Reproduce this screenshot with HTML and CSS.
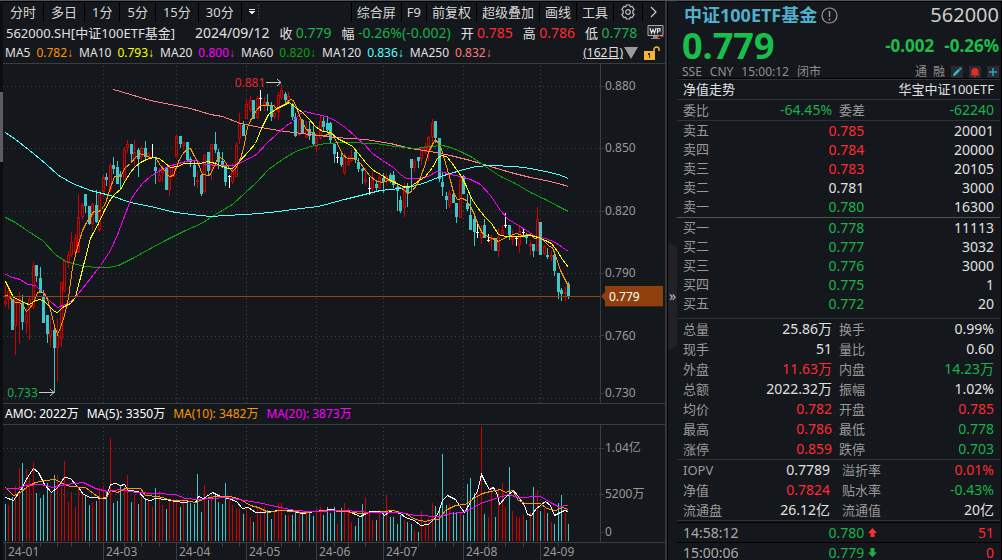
FILE: index.html
```html
<!DOCTYPE html>
<html lang="zh-CN">
<head>
<meta charset="utf-8">
<meta name="viewport" content="width=device-width, initial-scale=1">
<title>中证100ETF基金 562000</title>
<link rel="stylesheet" href="styles.css">
</head>
<body>
<div class="app">
  <div class="rail"><div class="rail-thumb"></div></div>

  <main class="main">
    <nav class="tabs">
      <button class="tab">分时</button>
      <button class="tab">多日</button>
      <button class="tab">1分</button>
      <button class="tab">5分</button>
      <button class="tab">15分</button>
      <button class="tab">30分</button>
      <button class="tab tab-more" aria-label="更多周期">
        <svg width="14" height="14" viewBox="0 0 14 14"><path d="M0 4h6v1H0zM0 6h6v1H5v1H4v1H2V8H1V7H0z" fill="#e4e4e4"/><path d="M9.500 0v14" stroke="#555" stroke-dasharray="1 2"/></svg>
      </button>
      <span class="spacer"></span>
      <button class="tab tool">综合屏</button>
      <button class="tab tool">F9</button>
      <button class="tab tool">前复权</button>
      <button class="tab tool">超级叠加</button>
      <button class="tab tool">画线</button>
      <button class="tab tool">工具</button>
      <button class="tab tool tool-icon" aria-label="设置">
        <svg width="16" height="16" viewBox="0 0 16 16" fill="none" stroke="#bdbdbd" stroke-width="1.200"><path d="M6.300 1h3.400l.6 1.900 1.900-.4 1.900 2.900L12.800 7v2l1.300 1.600-1.900 2.900-1.900-.4-.6 1.900H6.300l-.6-1.900-1.900.4-1.900-2.900L3.200 9V7L1.900 5.400l1.900-2.900 1.900.4z"/><circle cx="8" cy="8" r="2.300"/></svg>
      </button>
      <button class="tab tool tool-icon" aria-label="下一页">
        <svg width="10" height="12" viewBox="0 0 10 12" fill="none" stroke="#cfcfcf" stroke-width="1.200"><path d="M2 1l5 5-5 5"/></svg>
      </button>
    </nav>

    <div class="quote-line">
      <span class="name">562000.SH[中证100ETF基金]</span>
      <span class="num">2024/09/12</span>
      <span>收 <b class="num down">0.779</b></span>
      <span>幅 <b class="num down">-0.26%(-0.002)</b></span>
      <span>开 <b class="num up">0.785</b></span>
      <span>高 <b class="num up">0.786</b></span>
      <span>低 <b class="num down">0.778</b></span>
      <svg class="wp" width="17" height="17" viewBox="0 0 17 17"><path d="M1 1.500h15v10H1z" fill="#24272b" stroke="#aaa"/><path d="M6 12h5v2h2v1H4v-1h2z" fill="#888"/><path d="M3 4l1.500 5L6 5.500 7.500 9 9 4M10.500 9.500V4.500h2.500v2.500h-2.500" fill="none" stroke="#ddd" stroke-width="1.200"/><path d="M10 13.500l2.500-2 1.500 1.500 2.500-.5" fill="none" stroke="#e02626"/></svg>
    </div>

    <div class="ma-line">
      <span>MA5</span><span class="c-orange">0.782<i>↓</i></span>
      <span>MA10</span><span class="c-yellow">0.793<i>↓</i></span>
      <span>MA20</span><span class="c-magenta">0.800<i>↓</i></span>
      <span>MA60</span><span class="c-green">0.820<i>↓</i></span>
      <span>MA120</span><span class="c-cyan">0.836<i>↓</i></span>
      <span>MA250</span><span class="c-salmon">0.832<i>↓</i></span>
      <span class="spacer"></span>
      <button class="range">(162日)<svg width="14" height="12" viewBox="0 0 14 12"><path d="M0 0h14L7 12z" fill="#9b9b9b"/></svg></button>
      <svg class="lock" width="16" height="14" viewBox="0 0 16 14"><path d="M0 5h11v9H0z" fill="#f5b335"/><path d="M10 5V3.500a2.500 2.500 0 0 1 5 0V5" fill="none" stroke="#f5b335" stroke-width="1.500"/><path d="M4 7h2v5H5V9H4z" fill="#2a2418"/></svg>
    </div>

    <section class="pane price-pane">
      <div class="plot">
        <svg id="price" class="canvas" viewBox="3 64 597 339" preserveAspectRatio="none"></svg>
        <span class="mark mark-high">0.881<svg width="17" height="9" viewBox="0 0 17 9"><path d="M1 4.500h15M12 1l4 3.500L12 8" fill="none" stroke="#ccc"/></svg></span>
        <span class="mark mark-low">0.733<svg width="17" height="9" viewBox="0 0 17 9"><path d="M1 4.500h15M12 1l4 3.500L12 8" fill="none" stroke="#ccc"/></svg></span>
      </div>
      <div class="axis" id="price-axis">
        <div class="last-tag">0.779</div>
      </div>
    </section>

    <div class="amo-line">
      <span>AMO: 2022万</span>
      <span>MA(5): 3350万</span>
      <span class="c-orange">MA(10): 3482万</span>
      <span class="c-magenta">MA(20): 3873万</span>
    </div>

    <section class="pane volume-pane">
      <div class="plot"><svg id="volume" class="canvas" viewBox="3 425 597 117" preserveAspectRatio="none"></svg></div>
      <div class="axis" id="volume-axis"></div>
    </section>

    <div class="dates">
      <div class="plot" id="dates"></div>
      <div class="dates-end"></div>
    </div>
  </main>

  <button class="splitter" aria-label="收起侧栏"><span>»</span></button>

  <aside class="side">
    <header class="head">
      <div class="head-row">
        <h1>中证100ETF基金</h1>
        <svg width="17" height="17" viewBox="0 0 17 17" fill="none" stroke="#999"><circle cx="8.500" cy="8.500" r="7.500" stroke-width="1.200"/><path d="M8.500 4v6M8.500 11.500v2" stroke-width="1.500"/></svg>
        <span class="spacer"></span>
        <span class="code">562000</span>
      </div>
      <div class="head-row price-row">
        <strong class="last">0.779</strong>
        <span class="spacer"></span>
        <span class="chg">-0.002</span>
        <span class="chg">-0.26%</span>
      </div>
      <div class="head-row meta">
        <span>SSE</span><span>CNY</span><span>15:00:12</span><span>闭市</span>
        <span class="spacer"></span>
        <span class="flags">通</span><span class="flags">融</span>
        <button class="mini" aria-label="编辑"><svg width="12" height="12" viewBox="0 0 12 12"><path d="M2 10l.6-2.400 4.800-4.800 1.800 1.800-4.800 4.800zM8 2.200l1-1 1.800 1.800-1 1z" fill="#35b6cc"/></svg></button>
        <button class="mini" aria-label="提醒"><svg width="12" height="12" viewBox="0 0 12 12"><path d="M2.500 8V5.500a3.500 3.500 0 0 1 7 0V8l1 1.500h-9zM5 10h2v1H5z" fill="#e32d20"/></svg></button>
        <button class="mini" aria-label="添加"><svg width="12" height="12" viewBox="0 0 12 12"><path d="M6 2v8M2 6h8" stroke="#2fa3ba" stroke-width="1.500"/></svg></button>
      </div>
    </header>

    <div class="link-row"><a href="#nav">净值走势</a><a href="#fund">华宝中证100ETF</a></div>

    <table class="pairs ratio">
      <tr><th>委比</th><td class="down">-64.45%</td><th>委差</th><td class="down">-62240</td></tr>
    </table>

    <table class="book">
      <tr><th>卖五</th><td class="up">0.785</td><td>20001</td></tr>
      <tr><th>卖四</th><td class="up">0.784</td><td>20000</td></tr>
      <tr><th>卖三</th><td class="up">0.783</td><td>20105</td></tr>
      <tr><th>卖二</th><td>0.781</td><td>3000</td></tr>
      <tr><th>卖一</th><td class="down">0.780</td><td>16300</td></tr>
    </table>
    <table class="book bids">
      <tr><th>买一</th><td class="down">0.778</td><td>11113</td></tr>
      <tr><th>买二</th><td class="down">0.777</td><td>3032</td></tr>
      <tr><th>买三</th><td class="down">0.776</td><td>3000</td></tr>
      <tr><th>买四</th><td class="down">0.775</td><td>1</td></tr>
      <tr><th>买五</th><td class="down">0.772</td><td>20</td></tr>
    </table>

    <table class="pairs">
      <tr><th>总量</th><td>25.86万</td><th>换手</th><td>0.99%</td></tr>
      <tr><th>现手</th><td>51</td><th>量比</th><td>0.60</td></tr>
      <tr><th>外盘</th><td class="up">11.63万</td><th>内盘</th><td class="down">14.23万</td></tr>
      <tr><th>总额</th><td>2022.32万</td><th>振幅</th><td>1.02%</td></tr>
      <tr><th>均价</th><td class="up">0.782</td><th>开盘</th><td class="up">0.785</td></tr>
      <tr><th>最高</th><td class="up">0.786</td><th>最低</th><td class="down">0.778</td></tr>
      <tr><th>涨停</th><td class="up">0.859</td><th>跌停</th><td class="down">0.703</td></tr>
    </table>
    <table class="pairs fund">
      <tr><th>IOPV</th><td>0.7789</td><th>溢折率</th><td class="up">0.01%</td></tr>
      <tr><th>净值</th><td class="up">0.7824</td><th>贴水率</th><td class="down">-0.43%</td></tr>
      <tr><th>流通盘</th><td>26.12亿</td><th>流通值</th><td>20亿</td></tr>
    </table>

    <table class="ticks">
      <tr><th>14:58:12</th><td class="down">0.780</td><td class="dir"><svg width="9" height="10" viewBox="0 0 9 10"><path d="M4.500 0L9 5H6.500v4h-4V5H0z" fill="#ff2d2d"/></svg></td><td class="up">51</td></tr>
      <tr><th>15:00:06</th><td class="down">0.779</td><td class="dir"><svg width="9" height="10" viewBox="0 0 9 10"><path d="M4.500 9L0 4.500h2.500V0h4v4.500H9z" fill="#1fae4b"/></svg></td><td class="up">0</td></tr>
    </table>
  </aside>
</div>
<script src="chart.js"></script>
</body>
</html>
```
FILE: styles.css
```css
* { box-sizing: border-box; }

html, body { height: 100%; }

body {
  margin: 0;
  overflow: hidden;
  background: #14171b;
  color: #e0e0e0;
  font: 13px/20px "Noto Sans", "Noto Sans CJK SC", sans-serif;
}

button {
  margin: 0;
  padding: 0;
  border: 0;
  background: none;
  color: inherit;
  font: inherit;
  cursor: pointer;
}

a { color: inherit; text-decoration: none; }
b { font-weight: normal; }
svg { display: block; flex: none; }

.spacer { flex: 1; }
.up { color: #ff2a33; }
.down { color: #19b24b; }
.c-orange { color: #ff9500; }
.c-yellow { color: #ffff00; }
.c-magenta { color: #ff00ff; }
.c-green { color: #0aa50a; }
.c-cyan { color: #5ff; }
.c-salmon { color: #ff7b78; }

.app {
  display: grid;
  grid-template-rows: minmax(0, 1fr);
  grid-template-columns: 3px minmax(0, 1fr) 10px 325px;
  height: 100%;
  border-top: 1px solid #4c545f;
}

.rail {
  padding-top: 91px;
  background: #0b0d10;
}
.rail-thumb { height: 70px; background: #5c5c63; }

.main {
  display: grid;
  grid-template-columns: minmax(0, 1fr);
  grid-template-rows: 21px 21px 20px minmax(0, 340fr) 21px minmax(0, 118fr) 18px;
  border-right: 2px solid #35363a;
}

.tabs {
  display: flex;
  border-top: 1px solid #000;
}
.tab {
  display: flex;
  align-items: center;
  padding: 0 7px;
  border-right: 1px solid #000;
  white-space: nowrap;
  color: #d6d6d6;
}
.tab-more { border-right: 0; }
.tool {
  padding: 0 5px;
  border-right: 0;
  border-left: 1px solid #000;
}
.tool-icon { padding: 0 6px; }

.quote-line {
  display: flex;
  align-items: center;
  gap: 10px;
  padding: 0 2px 0 3px;
  white-space: nowrap;
}
.name { margin-right: 10px; }
.num { font-size: 14px; }
.wp { margin-left: auto; }

.ma-line {
  display: flex;
  align-items: center;
  gap: 6px;
  padding: 0 5px 0 2px;
  font-size: 12px;
  white-space: nowrap;
}
.ma-line i { font-family: "Liberation Sans", sans-serif; font-style: normal; }
.range { display: flex; align-items: center; gap: 1px; text-decoration: underline; }

.pane {
  display: grid;
  grid-template-columns: minmax(0, 1fr) 65px;
  border-top: 1px solid #3b3d40;
}
.plot { position: relative; min-height: 0; }
.canvas {
  position: absolute;
  inset: 0;
  width: 100%;
  height: 100%;
  shape-rendering: crispEdges;
}
.axis {
  position: relative;
  border-left: 1px solid #3b3d40;
  color: #999;
  font-size: 12px;
}
.axis-label {
  position: absolute;
  left: 0;
  display: flex;
  align-items: center;
  gap: 1px;
  line-height: 16px;
  transform: translateY(-50%);
}
.axis-label::before { width: 3px; height: 1px; background: #3b3d40; content: ""; }
.last-tag {
  position: absolute;
  z-index: 1;
  top: 68.500%;
  left: 0;
  width: 62px;
  padding-left: 8px;
  background: #8e3f0c;
  clip-path: polygon(4px 0, 100% 0, 100% 100%, 4px 100%, 4px 70%, 0 50%, 4px 30%);
  color: #fff;
  line-height: 21px;
  transform: translateY(-50%);
}

.mark {
  position: absolute;
  display: flex;
  align-items: center;
  font-size: 12px;
  line-height: 16px;
  transform: translateY(-50%);
}
.mark-high { top: 5.600%; left: 38.800%; color: #e8242c; }
.mark-low { top: 97%; left: 0.700%; color: #19b24b; }

.amo-line {
  display: flex;
  align-items: center;
  gap: 8px;
  padding-left: 2px;
  border-top: 1px solid #3b3d40;
  color: #fff;
  font-size: 12px;
  white-space: nowrap;
}
.amo-line .c-orange { color: #ff9500; }
.amo-line .c-magenta { color: #ff00ff; }

.dates {
  display: grid;
  grid-template-columns: minmax(0, 1fr) 65px;
  border-top: 1px solid #3b3d40;
  color: #999;
  font-size: 12px;
  line-height: 18px;
}
.date {
  position: absolute;
  top: 0;
  bottom: 0;
  padding-left: 2px;
  border-left: 1px solid #3b3d40;
}
.tick {
  position: absolute;
  top: 0;
  width: 1px;
  height: 4px;
  background: #3b3d40;
}

.splitter {
  display: grid;
  align-items: center;
  border-left: 1px solid #000;
}
.splitter span {
  height: 108px;
  margin-top: 32px;
  background: #222127;
  clip-path: polygon(0 0, 100% 5px, 100% 103px, 0 100%);
  color: #bbb;
  font-size: 14px;
  line-height: 106px;
}

.side {
  padding-right: 1px;
  border-top: 1px solid #000;
  border-right: 1px solid #000;
}
.head { padding: 1px 1px 0 5px; border-bottom: 1px solid #000; }
.head-row { display: flex; align-items: center; height: 24px; white-space: nowrap; }
.head h1 { margin: 0 4px 0 2px; color: #4fb0cc; font-size: 18px; line-height: 24px; }
.code { color: #ccc; font-size: 20px; }
.head .price-row { height: 38px; gap: 10px; }
.last { color: #19bf4d; font-size: 36px; line-height: 38px; }
.chg { color: #19bf4d; font-size: 17px; font-weight: bold; }
.head .meta { height: 13px; gap: 8px; color: #8f8f8f; font-size: 12px; line-height: 13px; }
.meta .flags { margin-right: -2px; }
.mini {
  display: grid;
  place-items: center;
  width: 12px;
  height: 12px;
  margin-right: -2px;
  background: #292b32;
}
.meta .mini:last-child { margin-right: 0; }

.link-row {
  display: flex;
  justify-content: space-between;
  padding: 0 6px;
  border-top: 1px solid #303236;
  border-bottom: 1px solid #303236;
  line-height: 19px;
}

table {
  width: 100%;
  border-collapse: collapse;
  border-spacing: 0;
  table-layout: fixed;
}
th, td { padding: 0; white-space: nowrap; }
th { color: #999; font-weight: normal; text-align: left; }
td { font-size: 14px; text-align: right; }
th:first-child { padding-left: 6px; }
td:last-child { padding-right: 6px; }

.pairs th { width: 13%; }
.pairs td { width: 35%; }
.pairs th:nth-child(3) { width: 52px; padding-left: 7px; }
.pairs tr { height: 20px; }
.fund td:nth-child(2) { padding-right: 2px; }
.fund th:nth-child(3) { padding-left: 10px; }
.fund { border-top: 1px solid #303236; border-bottom: 1px solid #303236; }

.book { border-top: 1px solid #303236; }
.book th { width: 18%; }
.book th, .book td { line-height: 19px; }
.book td:nth-child(2) { width: 40%; }
.book tr { height: 19px; }
.bids { margin-top: 1px; margin-bottom: 5px; border-top: 1px solid #505357; }
.bids + .pairs { border-top: 1px solid #303236; }

.ticks { margin-top: 1px; }
.ticks tr { height: 20px; border-top: 1px solid #000; }
.ticks th, .ticks td { line-height: 19px; }
.ticks th { width: 29%; color: #aaa; font-size: 14px; }
.ticks td:nth-child(2) { width: 29%; }
.ticks .dir { width: 16px; padding-left: 4px; }
```
FILE: chart.js
```js
const NS = "http://www.w3.org/2000/svg";
const RED = "#d40000", CYAN = "#3cc8c8", WHITE = "#ffffff", GRID = "#3f4246";

// One entry per day: high, low, body top, body bottom (chart units), kind.
const days = `
286 307 301 304 r|287 309 291 300 r|299 330 299 330 c|298 355 299 326 r|292 344 299 303 r|295 330 303 322 c|308 334 315 323 r|297 340 299 308 r|262 309 266 307 r|265 282 265 276 c
267 293 278 293 c|290 323 297 323 c|315 343 315 334 c|317 347 330 337 r|328 393 330 348 c|319 382 334 348 r|282 347 282 339 r|259 292 261 291 r|251 268 255 262 r|232 257 242 255 r
234 252 238 252 r|194 253 217 252 r|203 219 205 217 r|194 213 194 206 c|206 225 206 224 c|203 230 204 224 r|190 223 205 222 c|190 232 194 230 r|175 197 177 192 r|173 186 177 180 c
163 192 165 190 r|157 174 165 169 c|161 184 167 184 c|171 190 174 177 c|147 180 150 180 r|140 153 144 148 r|144 162 144 154 c|140 166 152 159 r|148 177 150 159 c|146 160 148 157 r
141 160 148 157 c|152 160 153 157 r|144 158 157 157 w|157 184 167 171 c|168 182 175 181 r|165 182 168 173 r|167 190 167 190 c|165 196 167 190 r|164 177 166 177 r|134 157 136 157 r
136 148 136 144 c|142 150 142 146 r|142 162 142 160 c|157 167 159 162 c|160 186 165 177 c|171 188 180 182 r|174 196 175 194 c|154 193 155 192 r|152 176 152 171 c|144 180 144 170 r
132 153 144 150 c|149 169 152 162 c|152 168 161 165 c|165 186 166 182 c|175 188 176 176 w|163 184 171 182 r|142 177 145 177 r|113 144 123 139 r|121 136 125 136 c|98 119 104 119 r
96 112 100 110 r|100 119 100 119 c|96 119 98 118 r|90 111 98 98 w|97 111 102 105 r|94 111 102 105 c|102 121 105 117 c|104 119 113 117 r|92 120 95 112 r|84 100 90 98 r
92 103 94 100 c|92 102 96 101 r|103 120 104 117 c|113 137 117 136 c|119 136 119 135 r|119 134 120 133 c|121 138 130 138 r|121 140 129 136 c|125 145 132 144 c|133 152 138 147 r
115 140 121 138 r|117 131 121 127 c|116 132 123 130 c|122 144 123 140 c|144 163 144 154 c|152 163 157 157 w|153 167 157 165 c|153 175 155 173 r|156 166 161 165 r|150 162 157 161 r
150 163 152 160 c|158 172 162 169 c|168 184 169 171 c|168 185 179 182 r|177 195 188 188 w|172 195 180 189 r|181 191 184 188 c|173 191 177 188 r|173 193 178 182 c|173 185 176 180 r
173 183 175 180 c|171 188 175 185 c|186 211 187 191 c|196 213 200 211 c|183 217 190 208 r|183 207 187 193 c|159 192 159 168 c|159 172 161 168 r|157 168 157 161 c|147 165 148 159 r
143 154 146 152 r|136 161 137 150 r|119 145 123 137 r|121 143 121 138 c|138 182 138 179 c|172 196 182 187 c|192 209 196 200 c|190 208 193 206 r|192 203 194 203 c|203 223 203 217 c
175 218 180 218 r|175 194 176 194 c|194 211 203 209 c|197 230 215 230 c|213 246 219 232 c|221 238 232 232 w|226 244 232 238 r|219 238 225 238 c|234 242 240 240 w|235 250 238 240 r
238 251 238 251 c|228 257 237 251 r|225 236 230 234 r|213 228 225 225 w|225 240 225 235 c|230 245 237 240 r|236 246 238 238 w|225 253 231 245 r|229 235 232 232 w|233 244 235 238 c
240 255 244 246 r|244 257 244 251 c|207 251 219 251 r|222 255 222 255 c|245 255 246 254 r|248 259 255 257 c|251 261 255 258 r|251 276 255 271 c|273 299 273 292 c|288 301 290 294 c
287 301 292 294 r|282 299 284 296 c`.trim().split(/[|\n]/).map(d => {
  const p = d.trim().split(" ");
  return { high: +p[0], low: +p[1], top: +p[2], bottom: +p[3], kind: p[4] };
});

// Height of each turnover bar, in thirds of a chart unit below y = 400.
const turnover = `312 316 292 258 205 188 207 235 186 278 294 285 248 283 225 226 262 183 305 275
320 262 278 288 315 305 302 263 258 275 114 310 303 255 262 225 305 285 312 290
293 295 320 263 273 315 328 300 297 298 320 298 300 310 313 222 335 255 300 285
278 305 312 248 292 315 327 327 342 325 352 366 322 330 322 330 357 330 310 308
345 345 345 330 335 343 335 332 347 325 320 345 320 340 322 372 325 310 325 365
378 355 312 292 335 360 360 330 340 285 352 352 372 345 360 365 372 390 395 333
370 355 310 318 320 162 315 312 335 340 340 345 252 235 280 275 78 342 352 260
352 270 250 320 202 333 348 350 345 360 335 262 270 332 325 340 365 372 310 285
338 372`.split(/\s+/).map(Number);
const turnoverDown = new Set([0, 55]);

const priceLines = [
  ["#ff8080", "113,89 130,94 150,100 170,104 190,108 210,114 222,116 240,123 260,127 285,131 310,134 335,137 365,139 390,143 410,148 430,151 450,155 470,160 490,166 510,172 530,177 545,180 558,183 568,186"],
  ["#0aa50a", "5,217 15,222 28,231 42,240 55,254 65,261 80,265 95,267 108,267 118,265 132,258 150,248 165,240 185,230 201,223 215,214 232,204 244,193 256,182 268,169 282,159 295,151 310,146 325,143 345,142 375,143 395,146 415,148 430,146 442,145 450,147 460,151 472,157 485,166 500,176 515,183 530,192 545,199 558,206 568,211"],
  ["#55ffff", "5,132 15,139 28,149 45,163 58,175 72,183 90,190 110,195 130,202 150,206 175,212 200,215 210,216 225,215 245,214 270,212 300,208 318,206 340,200 360,195 380,190 400,188 412,186 425,182 440,176 460,170 475,166 490,165 515,166 530,168 545,171 558,174 568,178"],
  ["#ff00ff", "5,274 12,277 20,279 27,284 35,285 42,292 50,301 57,307 65,304 74,298 82,288 90,278 100,265 110,250 118,232 125,213 130,200 135,192 142,183 150,176 160,170 168,166 178,163 190,160 197,160 200,163 215,165 233,165 245,160 256,154 266,143 276,134 285,126 292,121 300,113 305,111 312,113 322,115 333,119 345,127 355,136 363,143 372,153 382,160 393,167 400,174 406,178 418,178 428,176 436,171 440,171 450,174 460,176 470,179 480,184 490,195 500,210 508,219 518,225 526,230 535,236 545,238 555,242 562,247 568,251"],
  ["#ff9500", "5,295 9,296 12,300 15,302 19,302 23,306 26,311 30,307 33,302 37,292 41,291 44,293 47,299 51,313 54,326 57,334 60,327 64,315 68,297 72,267 76,250 82,230 86,222 90,217 93,211 97,212 101,209 105,203 109,190 114,176 120,176 125,167 130,163 134,158 139,153 145,155 150,157 155,157 160,165 164,170 169,176 173,175 178,161 182,154 187,148 190,148 193,154 197,161 202,174 209,175 213,168 217,158 220,157 223,159 229,168 232,171 236,167 240,158 243,148 247,127 251,118 256,110 260,105 273,105 276,108 280,106 285,103 290,99 293,100 296,107 301,120 306,129 310,131 316,135 325,135 331,132 337,143 342,154 347,158 355,158 360,163 365,170 370,176 375,180 381,182 388,180 394,180 398,186 404,190 408,193 412,190 416,185 420,177 424,166 428,152 432,144 435,139 439,144 442,152 446,166 450,180 453,192 457,199 462,198 466,200 470,206 474,214 478,225 482,233 487,236 492,238 498,241 503,238 510,235 516,233 522,235 530,234 534,238 540,237 545,242 549,246 552,247 555,255 560,270 565,280 569,288"],
  ["#ffff00", "5,281 13,297 20,300 25,303 29,304 35,300 40,299 45,302 50,307 54,311 57,312 62,307 70,303 75,297 79,281 83,265 87,250 90,238 92,234 98,223 104,210 110,199 115,193 120,189 125,180 130,172 135,166 140,162 146,159 153,157 159,158 165,163 170,167 177,166 184,163 192,163 200,163 207,161 215,163 222,166 228,168 232,168 238,162 248,151 255,143 261,128 268,114 275,109 285,104 289,102 295,107 302,112 308,118 315,126 322,131 330,132 337,138 345,142 352,146 358,153 365,162 373,170 380,174 388,179 396,183 403,186 410,186 416,182 425,176 432,167 437,158 441,155 446,156 451,162 456,169 461,176 466,186 471,198 477,207 484,216 491,223 498,234 505,236 513,236 520,236 530,235 538,237 545,240 551,243 557,251 562,259 568,267"]
];

const volumeLines = [
  ["#ffffff", "5,497 13,500 20,490 27,477 33,468 38,472 44,484 51,492 57,487 64,477 70,478 78,487 83,494 90,497 105,498 107,493 110,484 115,483 120,485 124,484 128,490 138,491 145,499 150,500 155,498 165,499 175,501 183,502 190,501 195,502 198,496 203,498 212,492 220,496 228,498 236,501 242,508 248,507 255,512 262,512 270,511 280,510 290,510 302,513 315,511 330,509 338,510 348,511 360,516 370,511 380,511 384,515 389,511 400,513 405,517 414,520 420,525 428,524 434,518 438,512 442,500 447,495 455,499 461,508 464,512 471,500 477,491 481,474 485,482 489,489 493,487 497,494 499,504 505,497 513,490 517,495 524,505 527,514 531,515 536,508 545,501 550,505 554,515 558,513 564,510 568,511"],
  ["#ff9500", "5,487 13,495 20,492 27,486 35,482 45,480 55,479 62,483 70,486 85,487 93,493 100,498 106,497 110,490 117,492 125,488 140,488 145,495 158,496 172,500 185,500 195,502 205,498 215,496 230,496 240,499 250,505 258,507 268,512 280,510 305,512 325,510 345,511 360,513 375,512 392,510 405,513 415,519 425,521 432,519 438,519 445,510 455,505 465,504 475,497 482,493 490,491 500,489 505,492 512,490 518,500 525,503 540,503 546,508 555,510 562,507 568,509"],
  ["#ff00ff", "5,488 17,488 25,485 40,484 53,487 65,484 83,482 95,488 107,491 120,489 135,492 155,493 175,494 185,498 198,499 225,497 245,500 262,503 280,507 295,510 310,511 345,510 370,512 400,512 415,515 440,516 450,513 462,512 470,509 480,503 495,498 508,494 518,497 540,496 550,502 558,506 568,505"]
];

const months = [[5, "24-01"], [103, "24-03"], [176, "24-04"], [246, "24-05"], [316, "24-06"], [383, "24-07"], [463, "24-08"], [540, "24-09"]];
const minorTicks = [22, 40, 57, 71, 89, 124, 141, 159, 187, 204, 222, 239, 264, 281, 299, 334, 348, 365, 400, 418, 435, 453, 470, 488, 505, 523, 558];

function add(parent, tag, attrs) {
  const el = document.createElementNS(NS, tag);
  for (const k in attrs) el.setAttribute(k, attrs[k]);
  parent.appendChild(el);
}
function line(parent, x1, y1, x2, y2, stroke, dash) {
  add(parent, "path", { d: `M${x1} ${y1}L${x2} ${y2}`, stroke, fill: "none", ...(dash ? { "stroke-dasharray": dash } : {}) });
}
function grid(svg, rows, top, bottom) {
  rows.forEach(y => line(svg, 3, y + .5, 600, y + .5, GRID, "1 3"));
  months.slice(1).forEach(([x]) => line(svg, x + .5, top, x + .5, bottom, GRID, "1 3"));
}
function curves(svg, list) {
  for (const [stroke, points] of list) add(svg, "polyline", { points, stroke, fill: "none", "stroke-width": 1, transform: "translate(.5 .5)" });
}
const dayX = i => 5 + Math.round(i * 3.497);

const price = document.getElementById("price");
grid(price, [86, 148, 211, 273, 336, 398], 66, 403);
days.forEach((d, i) => {
  const x = dayX(i);
  if (d.kind === "c") {
    line(price, x + .5, d.high, x + .5, d.low, CYAN);
    add(price, "rect", { x: x - 1, y: d.top, width: 3, height: d.bottom - d.top, fill: CYAN });
  } else if (d.kind === "r") {
    line(price, x + .5, d.high, x + .5, d.top, RED);
    line(price, x + .5, d.bottom, x + .5, d.low, RED);
    add(price, "rect", { x: x - .5, y: d.top + .5, width: 2, height: Math.max(1, d.bottom - d.top - 1), fill: "none", stroke: RED });
  } else {
    line(price, x + .5, d.high, x + .5, d.low, WHITE);
    line(price, x - 1, d.top + .5, x + 2, d.top + .5, WHITE);
  }
});
curves(price, priceLines);
line(price, 3, 296.5, 600, 296.5, "#9a450f");

const volume = document.getElementById("volume");
grid(volume, [448, 494], 427, 542);
turnover.forEach((t, i) => {
  const color = days[i].kind === "c" || turnoverDown.has(i) ? CYAN : RED;
  line(volume, dayX(i) + .5, Math.round(400 + t / 3), dayX(i) + .5, 541, color);
});
curves(volume, volumeLines);

function axisLabels(id, labels, top, height) {
  const axis = document.getElementById(id);
  for (const [y, text] of labels) {
    const el = document.createElement("span");
    el.className = "axis-label";
    el.style.top = (y - top) / height * 100 + "%";
    el.textContent = text;
    axis.appendChild(el);
  }
}
axisLabels("price-axis", [[86, "0.880"], [148, "0.850"], [211, "0.820"], [273, "0.790"], [336, "0.760"], [393, "0.730"]], 64, 339);
axisLabels("volume-axis", [[448, "1.04亿"], [494, "5200万"], [532, "0"]], 425, 117);

const dates = document.getElementById("dates");
function place(x, className, text) {
  const el = document.createElement("span");
  el.className = className;
  el.style.left = (x - 3) / 597 * 100 + "%";
  el.textContent = text;
  dates.appendChild(el);
}
months.forEach(([x, text]) => place(x, "date", text));
minorTicks.forEach(x => place(x, "tick", ""));
```
